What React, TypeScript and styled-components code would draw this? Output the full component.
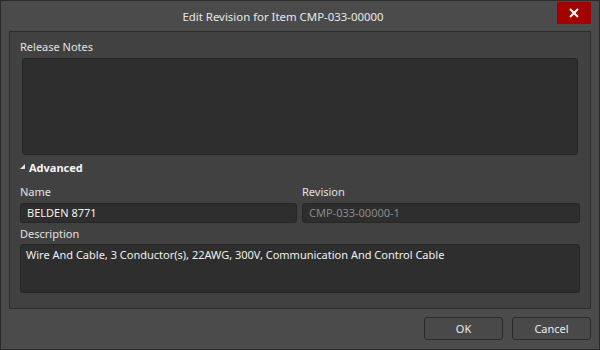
import * as React from 'react';
import styled, { createGlobalStyle } from 'styled-components';

const GlobalStyle = createGlobalStyle`
    html, body {
        margin: 0;
        padding: 0;
        background: #4b4b4b;
    }
    * {
        box-sizing: border-box;
    }
`;

const StyledWindow = styled.div`
    width: 600px;
    height: 350px;
    display: flex;
    flex-direction: column;
    background: #4b4b4b;
    border: 1px solid #2b2b2b;
    font-family: "Noto Sans", "Open Sans", sans-serif;
    font-size: 11px;
    color: #e4e4e4;
`;
const StyledTitleBar = styled.div`
    position: relative;
    height: 30px;
    display: flex;
    align-items: center;
    justify-content: center;
    padding-right: 34px;
    font-size: 11.4px;
    color: #e8e8e8;
`;
const StyledCloseButton = styled.button`
    position: absolute;
    top: 1px;
    right: 8px;
    width: 34px;
    height: 22px;
    border: none;
    padding: 0;
    background: #a30000;
    display: flex;
    align-items: center;
    justify-content: center;
`;
const StyledPanel = styled.div`
    margin: 0 8px;
    height: 278px;
    display: flex;
    flex-direction: column;
    padding: 7px 10px 15px 10px;
    background: #414141;
    border: 1px solid #2c2c2c;
`;
const StyledLabel = styled.div<{ $top?: number }>`
    height: 16px;
    line-height: 16px;
    margin-top: ${p => p.$top || 0}px;
    color: #e2e2e2;
    white-space: nowrap;
`;
const StyledNotes = styled.div`
    margin: 3px 2px 0 2px;
    height: 97px;
    background: #2e2e2e;
    border: 1px solid #262626;
    border-radius: 3px;
`;
const StyledSection = styled.div`
    height: 16px;
    margin-top: 4px;
    display: flex;
    align-items: center;
    gap: 3px;
    font-weight: 700;
    color: #f4f4f4;
`;
const StyledFieldGrid = styled.div`
    display: grid;
    grid-template-columns: 277px 278px;
    column-gap: 5px;
    margin-top: 9px;
`;
const StyledField = styled.div`
    display: flex;
    flex-direction: column;
`;
const StyledInput = styled.div<{ $disabled?: boolean }>`
    margin-top: 3px;
    height: 20px;
    line-height: 18px;
    padding: 0 6px;
    background: #2e2e2e;
    border: 1px solid #262626;
    border-radius: 3px;
    color: ${p => (p.$disabled ? '#8a8a8a' : '#f0f0f0')};
    white-space: nowrap;
`;
const StyledTextArea = styled.div`
    margin-top: 2px;
    height: 49px;
    padding: 1px 5px;
    line-height: 18px;
    background: #2e2e2e;
    border: 1px solid #262626;
    border-radius: 3px;
    color: #f0f0f0;
`;
const StyledFooter = styled.div`
    display: flex;
    justify-content: flex-end;
    gap: 9px;
    padding: 8px 8px 0 0;
`;
const StyledButton = styled.button`
    width: 79px;
    height: 23px;
    padding: 0;
    background: #494949;
    border: 1px solid #2a2a2a;
    border-radius: 3px;
    font-family: inherit;
    font-size: 11px;
    color: #ececec;
`;

const CloseIcon = () => (
    <svg width="10" height="10" viewBox="0 0 10 10">
        <path d="M1 1 L9 9 M9 1 L1 9" stroke="#ffffff" strokeWidth="2" />
    </svg>
);

const ExpandedIcon = () => (
    <svg width="6" height="6" viewBox="0 0 6 6">
        <path d="M5 0 L5 5 L0 5 Z" fill="#e0e0e0" />
    </svg>
);

export default function App() {
    return (
        <>
            <GlobalStyle />
            <StyledWindow>
                <StyledTitleBar>
                    Edit Revision for Item CMP-033-00000
                    <StyledCloseButton>
                        <CloseIcon />
                    </StyledCloseButton>
                </StyledTitleBar>
                <StyledPanel>
                    <StyledLabel>Release Notes</StyledLabel>
                    <StyledNotes />
                    <StyledSection>
                        <ExpandedIcon />
                        Advanced
                    </StyledSection>
                    <StyledFieldGrid>
                        <StyledField>
                            <StyledLabel>Name</StyledLabel>
                            <StyledInput>BELDEN 8771</StyledInput>
                        </StyledField>
                        <StyledField>
                            <StyledLabel>Revision</StyledLabel>
                            <StyledInput $disabled>CMP-033-00000-1</StyledInput>
                        </StyledField>
                    </StyledFieldGrid>
                    <StyledLabel $top={3}>Description</StyledLabel>
                    <StyledTextArea>
                        Wire And Cable, 3 Conductor(s), 22AWG, 300V, Communication And Control Cable
                    </StyledTextArea>
                </StyledPanel>
                <StyledFooter>
                    <StyledButton>OK</StyledButton>
                    <StyledButton>Cancel</StyledButton>
                </StyledFooter>
            </StyledWindow>
        </>
    );
}
